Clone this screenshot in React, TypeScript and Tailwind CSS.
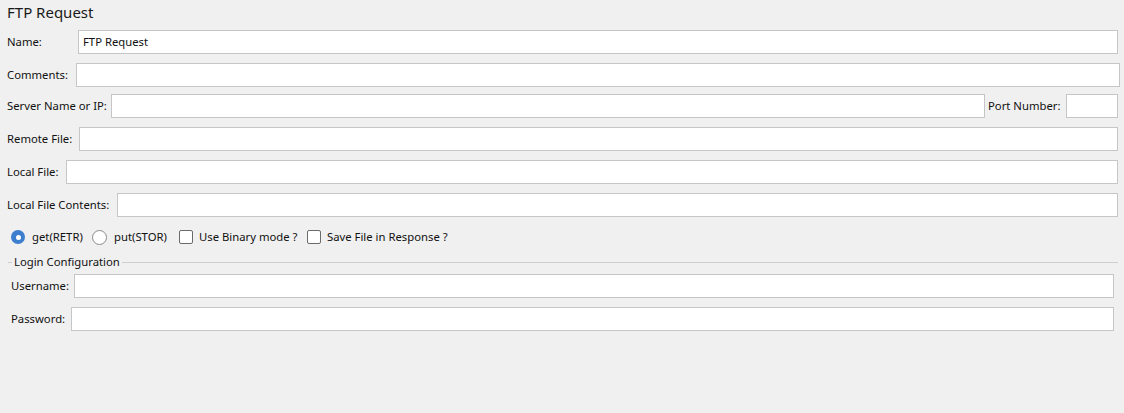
import React from "react";

const inputCls = "h-[24px] bg-white border border-[#c6c6c6] box-border";

function Row({ label, labelW, pl = 7, pr = 6, mt, value }: { label: string; labelW: number; pl?: number; pr?: number; mt: number; value?: string }) {
  return (
    <div className="flex items-center h-[24px]" style={{ marginTop: mt, paddingLeft: pl, paddingRight: pr }}>
      <div className="shrink-0 whitespace-nowrap" style={{ width: labelW }}>{label}</div>
      <div className={`flex-1 ${inputCls} flex items-center pl-[4px]`}>{value}</div>
    </div>
  );
}

export default function App() {
  return (
    <div
      className="w-[1124px] h-[413px] bg-[#f0f0f0] text-[11.3px] text-[#111] overflow-hidden"
      style={{ fontFamily: '"Noto Sans", "Open Sans", sans-serif' }}
    >
      <div className="pl-[7px] h-[24px] text-[15px] leading-[24px] text-[#1a1a1a]">FTP Request</div>
      <Row label="Name:" labelW={71} mt={6} value="FTP Request" />
      <Row label="Comments:" labelW={69} pr={4} mt={9} />
      <div className="flex items-center h-[24px] mt-[7px] pl-[7px] pr-[6px]">
        <div className="shrink-0 w-[104px] whitespace-nowrap">Server Name or IP:</div>
        <div className={`w-[874px] ${inputCls}`} />
        <div className="shrink-0 w-[81px] pl-[3px] whitespace-nowrap">Port Number:</div>
        <div className={`flex-1 ${inputCls}`} />
      </div>
      <Row label="Remote File:" labelW={72} mt={9} />
      <Row label="Local File:" labelW={59} mt={9} />
      <Row label="Local File Contents:" labelW={110} mt={9} />
      <div className="flex items-center h-[16px] mt-[12px] pl-[11px]">
        <div className="flex items-center w-[81px] shrink-0">
          <span className="w-[14px] h-[14px] rounded-full bg-[#3d7ecf] flex items-center justify-center shrink-0">
            <span className="w-[5px] h-[5px] rounded-full bg-white" />
          </span>
          <span className="ml-[7px] whitespace-nowrap">get(RETR)</span>
        </div>
        <div className="flex items-center w-[87px] shrink-0">
          <span className="w-[15px] h-[15px] rounded-full border border-[#8a8a8a] bg-white shrink-0" />
          <span className="ml-[7px] whitespace-nowrap">put(STOR)</span>
        </div>
        <div className="flex items-center w-[128px] shrink-0">
          <span className="w-[14px] h-[14px] rounded-[2px] border border-[#6b6b6b] bg-white shrink-0" />
          <span className="ml-[6px] whitespace-nowrap">Use Binary mode ?</span>
        </div>
        <div className="flex items-center shrink-0">
          <span className="w-[14px] h-[14px] rounded-[2px] border border-[#6b6b6b] bg-white shrink-0" />
          <span className="ml-[6px] whitespace-nowrap">Save File in Response ?</span>
        </div>
      </div>
      <div className="flex items-center h-[16px] mt-[9px] pl-[8px] pr-[6px]">
        <div className="w-[4px] h-px bg-[#cfcfcf] shrink-0" />
        <div className="px-[2px] whitespace-nowrap">Login Configuration</div>
        <div className="flex-1 h-px bg-[#cfcfcf]" />
      </div>
      <Row label="Username:" labelW={63} pl={11} pr={10} mt={4} />
      <Row label="Password:" labelW={60} pl={11} pr={10} mt={9} />
    </div>
  );
}
